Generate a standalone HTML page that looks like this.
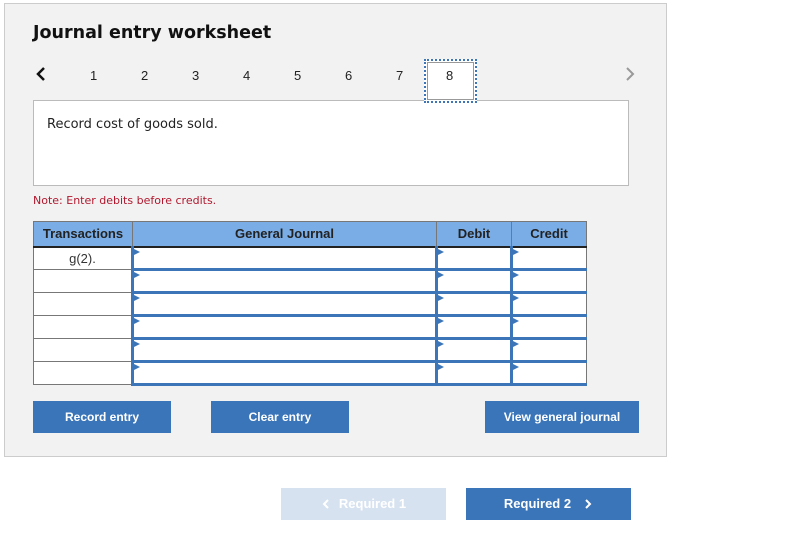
<!DOCTYPE html>
<html><head><style>
body{margin:0;width:785px;height:533px;background:#fff;font-family:"Liberation Sans",Arial,sans-serif;position:relative;overflow:hidden}
.abs{position:absolute}
.panel{left:4px;top:3px;width:663px;height:454px;background:#f2f2f2;border:1px solid #ccc;box-sizing:border-box}
h1{position:absolute;left:33px;top:23px;margin:0;font-size:17.5px;font-weight:bold;color:#111;font-family:"DejaVu Sans",sans-serif;letter-spacing:0}
.num{position:absolute;top:68px;font-size:13px;color:#222}
.box{left:33px;top:100px;width:596px;height:86px;background:#fff;border:1px solid #bbb;box-sizing:border-box}
.txt{font-family:"DejaVu Sans",sans-serif;font-size:12px}
table{position:absolute;left:33px;top:221px;border-collapse:collapse}
td,th{border:1px solid #777;padding:0;height:23px;box-sizing:border-box}
th{background:#7aade5;font-size:13px;font-weight:bold;color:#222;border-bottom:2px solid #222;height:25px}
td{background:#fff;position:relative}
td.in{border-left:3px solid #3c76b8;border-bottom:3px solid #3c76b8}
td.in:before{content:"";position:absolute;left:0;top:1px;border-left:6px solid #3c76b8;border-top:3px solid transparent;border-bottom:3px solid transparent}
.btn{position:absolute;background:#3a75b9;color:#fff;font-size:12px;font-weight:bold;text-align:center;line-height:32px;height:32px}
</style></head><body>
<div class="abs panel"></div>
<h1>Journal entry worksheet</h1>
<svg class="abs" style="left:34px;top:66px" width="14" height="16"><path d="M10 2 L4 8 L10 14" stroke="#111" stroke-width="2.5" fill="none"/></svg>
<div class="num" style="left:90px">1</div>
<div class="num" style="left:141px">2</div>
<div class="num" style="left:192px">3</div>
<div class="num" style="left:243px">4</div>
<div class="num" style="left:294px">5</div>
<div class="num" style="left:345px">6</div>
<div class="num" style="left:396px">7</div>
<div class="abs box"></div>
<div class="abs" style="left:424px;top:59px;width:53px;height:44px;background:#fff;border:2px dotted #3c76b8;box-sizing:border-box;z-index:2"><div style="position:absolute;left:1px;top:1px;right:1px;bottom:1px;border:1px solid #999"></div></div>
<div class="num" style="left:446px;z-index:3">8</div>
<svg class="abs" style="left:623px;top:66px" width="14" height="16"><path d="M4 2 L10 8 L4 14" stroke="#999" stroke-width="2" fill="none"/></svg>
<div class="abs txt" style="left:47px;top:117px;color:#222;font-size:13px">Record cost of goods sold.</div>
<div class="abs txt" style="left:33px;top:194px;color:#b0182e;font-size:11px">Note: Enter debits before credits.</div>
<table>
<tr><th style="width:99px">Transactions</th><th style="width:304px">General Journal</th><th style="width:75px">Debit</th><th style="width:75px">Credit</th></tr>
<tr><td style="text-align:center;font-size:13px;color:#333">g(2).</td><td class="in"></td><td class="in"></td><td class="in"></td></tr>
<tr><td></td><td class="in"></td><td class="in"></td><td class="in"></td></tr>
<tr><td></td><td class="in"></td><td class="in"></td><td class="in"></td></tr>
<tr><td></td><td class="in"></td><td class="in"></td><td class="in"></td></tr>
<tr><td></td><td class="in"></td><td class="in"></td><td class="in"></td></tr>
<tr><td></td><td class="in"></td><td class="in"></td><td class="in"></td></tr>
</table>
<div class="btn" style="left:33px;top:401px;width:138px">Record entry</div>
<div class="btn" style="left:211px;top:401px;width:138px">Clear entry</div>
<div class="btn" style="left:485px;top:401px;width:154px">View general journal</div>
<div class="btn" style="left:281px;top:488px;width:165px;background:#d6e2f0;font-size:13px"><svg width="10" height="10" style="vertical-align:-1px;margin-right:8px"><path d="M7 1 L3 5 L7 9" stroke="#fff" stroke-width="2" fill="none"/></svg>Required 1</div>
<div class="btn" style="left:466px;top:488px;width:165px;font-size:13px">Required 2<svg width="10" height="10" style="vertical-align:-1px;margin-left:12px"><path d="M3 1 L7 5 L3 9" stroke="#fff" stroke-width="2" fill="none"/></svg></div>
</body></html>
